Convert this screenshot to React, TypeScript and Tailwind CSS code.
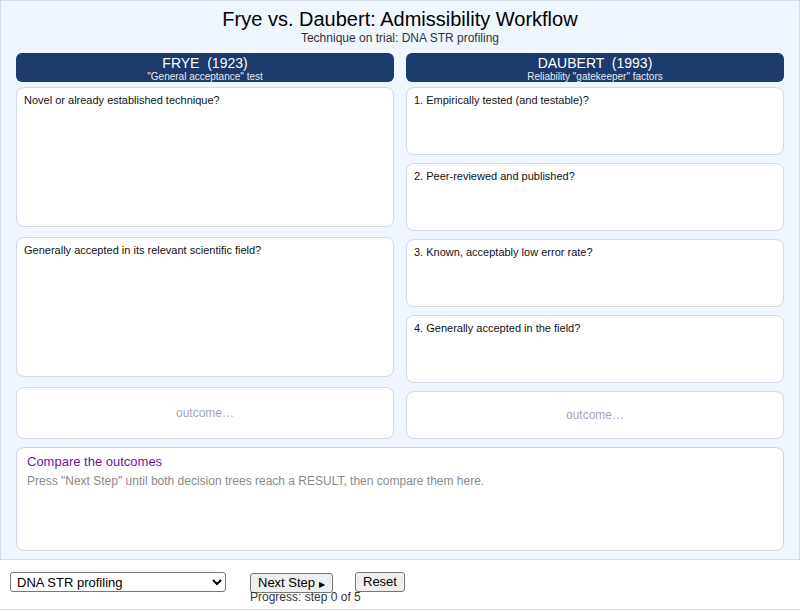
import { useState } from 'react';

const fryeSteps = [
  'Novel or already established technique?',
  'Generally accepted in its relevant scientific field?',
];

const daubertSteps = [
  '1. Empirically tested (and testable)?',
  '2. Peer-reviewed and published?',
  '3. Known, acceptably low error rate?',
  '4. Generally accepted in the field?',
];

function ColumnHeader({ title, subtitle }: { title: string; subtitle: string }) {
  return (
    <div className="flex h-[29px] flex-col items-center rounded-[6px] bg-[#1c3a6b] pt-[2px] text-white">
      <div className="whitespace-pre text-[14px] leading-[16px]">{title}</div>
      <div className="text-[10px] leading-[11px] text-[#e6ecf5]">{subtitle}</div>
    </div>
  );
}

function StepBox({ text, className }: { text: string; className: string }) {
  return (
    <div
      className={`rounded-[8px] border border-[#d3dae6] bg-white px-[7px] pt-[5px] text-[11px] leading-[14px] text-[#111] ${className}`}
    >
      {text}
    </div>
  );
}

function OutcomeBox({ className }: { className: string }) {
  return (
    <div
      className={`flex items-center justify-center rounded-[8px] border border-[#d3dae6] bg-white text-[12px] text-[#a3a8b0] ${className}`}
    >
      outcome…
    </div>
  );
}

export default function App() {
  const [technique, setTechnique] = useState('DNA STR profiling');

  return (
    <div className="w-[800px] bg-white font-['Liberation_Sans',Arial,sans-serif]">
      <div className="h-[560px] border border-[#d6dce6] bg-[#eff6ff] px-[15px]">
        <div className="pt-[6px] text-center">
          <h1 className="text-[20px] leading-[24px] text-black">
            Frye vs. Daubert: Admissibility Workflow
          </h1>
          <p className="text-[12px] leading-[14px] text-[#333]">
            Technique on trial: {technique}
          </p>
        </div>

        <div className="mt-[8px] grid grid-cols-2 gap-3">
          <div className="flex flex-col">
            <ColumnHeader title="FRYE  (1923)" subtitle={'"General acceptance" test'} />
            <div className="mt-[5px] flex flex-col gap-[10px]">
              {fryeSteps.map((s) => (
                <StepBox key={s} text={s} className="h-[140px]" />
              ))}
              <OutcomeBox className="h-[52px]" />
            </div>
          </div>
          <div className="flex flex-col">
            <ColumnHeader title="DAUBERT  (1993)" subtitle={'Reliability "gatekeeper" factors'} />
            <div className="mt-[5px] flex flex-col gap-[8px]">
              {daubertSteps.map((s) => (
                <StepBox key={s} text={s} className="h-[68px]" />
              ))}
              <OutcomeBox className="h-[48px]" />
            </div>
          </div>
        </div>

        <div className="mt-[8px] h-[104px] rounded-[8px] border border-[#d6cdee] bg-white px-[10px] pt-[6px]">
          <div className="text-[13px] leading-[16px] text-[#6a1b9a]">Compare the outcomes</div>
          <p className="mt-[4px] text-[12px] leading-[14px] text-[#8a8a8a]">
            Press "Next Step" until both decision trees reach a RESULT, then compare them here.
          </p>
        </div>
      </div>

      <div className="flex h-[50px] items-start border-b border-[#d6dce6] px-[10px] pt-[12px]">
        <select
          value={technique}
          onChange={(e) => setTechnique(e.target.value)}
          className="h-[20px] w-[216px] rounded-[3px] border border-[#767676] bg-white pl-[2px] text-[13px] text-black"
        >
          <option>DNA STR profiling</option>
          <option>Bite-mark analysis</option>
          <option>Polygraph</option>
        </select>
        <div className="ml-[24px] flex w-[85px] flex-col items-start">
          <button className="mt-[1px] h-[20px] rounded-[3px] border border-[#767676] bg-[#efefef] px-[7px] text-[13px] leading-[18px] text-black">
            Next Step <span className="text-[8px]">▶</span>
          </button>
          <span className="-mt-[2px] whitespace-nowrap text-[12px] leading-[12px] text-[#333]">
            Progress: step 0 of 5
          </span>
        </div>
        <button className="ml-[20px] h-[20px] rounded-[3px] border border-[#767676] bg-[#efefef] px-[7px] text-[13px] leading-[18px] text-black">
          Reset
        </button>
      </div>
    </div>
  );
}
